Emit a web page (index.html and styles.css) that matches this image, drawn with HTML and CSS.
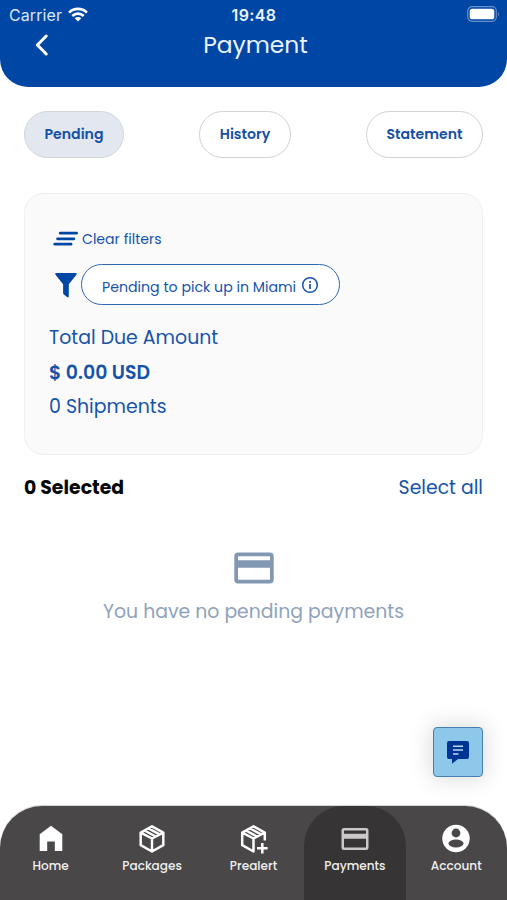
FILE: index.html
```html
<!DOCTYPE html>
<html lang="en">
<head>
<meta charset="utf-8">
<title>Payment</title>
<link rel="stylesheet" href="styles.css">
</head>
<body>
<div class="screen">
  <header class="header">
    <div class="status">
      <div class="carrier"><span>Carrier</span>
        <svg class="wifi" viewBox="0 0 20 15" width="20" height="15" fill="none" stroke="#fff" stroke-width="2.6"><path d="M1.1 5.6A12.6 12.6 0 0 1 18.9 5.6M4.3 9A8.1 8.1 0 0 1 15.7 9"/><path d="M10 14.6 6.7 11.3A4.7 4.7 0 0 1 13.3 11.3Z" fill="#fff" stroke="none"/></svg>
      </div>
      <div class="clock">19:48</div>
      <svg class="battery" viewBox="0 0 33 16" width="33" height="16"><rect x=".7" y=".7" width="28.6" height="14.6" rx="4.5" fill="none" stroke="#6690c8" stroke-width="1.2"/><rect x="2.7" y="2.7" width="24.6" height="10.6" rx="2.6" fill="#fff"/><path d="M31 5.7q2 2.3 0 4.6z" fill="#6690c8"/></svg>
    </div>
    <div class="titlebar">
      <svg class="back" viewBox="0 0 14 22" width="14" height="22" fill="none" stroke="#fff" stroke-width="3" stroke-linecap="round" stroke-linejoin="round"><path d="M11.2 2 2.4 11l8.8 9"/></svg>
      <h1>Payment</h1>
    </div>
  </header>

  <main class="content">
    <div class="tabs">
      <button class="tab tab-pending active">Pending</button>
      <button class="tab tab-history">History</button>
      <button class="tab tab-statement">Statement</button>
    </div>

    <section class="card">
      <div class="clear">
        <svg viewBox="0 0 26 16" width="26" height="16" stroke="#0047a5" stroke-width="2.7" stroke-linecap="round"><path d="M7.2 2.2h16.4M4.5 7.8h16.4M1.7 13.2h16.4"/></svg>
        <span>Clear filters</span>
      </div>
      <div class="filter">
        <svg viewBox="0 0 24 26" width="24" height="26"><path d="M2.4 1h19q2 .1 1 1.8L14.8 12.2v12q-.2 1.9-1.7.9l-3.5-2.8q-.5-.5-.5-1.2v-8.9L1.5 2.8Q.5 1.1 2.4 1z" fill="#0047a5"/></svg>
        <div class="chip"><span>Pending to pick up in Miami</span>
          <svg viewBox="0 0 18 18" width="18" height="18" fill="none" stroke="#1553aa" stroke-width="1.5"><circle cx="9" cy="9" r="7.3"/><path d="M9 8v4.9M9 4.9v1.8" stroke-width="1.7"/></svg>
        </div>
      </div>
      <p class="due">Total Due Amount</p>
      <p class="amount">$ 0.00 USD</p>
      <p class="shipments">0 Shipments</p>
    </section>

    <div class="selection"><strong>0 Selected</strong><a>Select all</a></div>

    <div class="empty">
      <svg viewBox="0 0 40 32" width="40" height="32"><path fill-rule="evenodd" fill="#8297b2" d="M4 .5h32a3.7 3.7 0 0 1 3.7 3.7v23.6a3.7 3.7 0 0 1-3.7 3.7H4a3.7 3.7 0 0 1-3.7-3.7V4.2A3.7 3.7 0 0 1 4 .5zM4 4.300v3.900h32V4.300zM4 15.800v11.900h32V15.800z"/></svg>
      <p>You have no pending payments</p>
    </div>
  </main>

  <div class="fab-row">
    <button class="fab" aria-label="Chat">
      <svg viewBox="0 0 24 24" width="24" height="24"><path d="M3 1h18q2 0 2 2v14q0 2-2 2h-9l-6 4.800V19H3q-2 0-2-2V3q0-2 2-2z" fill="#003494"/><path d="M7 6.300h10M7 10.100h10M7 13.900h5.500" stroke="#b7daf0" stroke-width="1.500"/></svg>
    </button>
  </div>

  <nav class="nav">
    <a class="item"><svg viewBox="0 0 28 30" width="28" height="30"><path fill="#fff" d="M2.700 27V10.300L14 1.800l11.300 8.500V27h-7.500v-9.500h-7.600V27z"/></svg><span>Home</span></a>
    <a class="item"><svg viewBox="0 0 28 30" width="28" height="30" fill="none" stroke="#fff" stroke-width="2.500" stroke-linejoin="round"><path d="M14 2.300 25.300 8.600V21.200L14 27.500 2.700 21.200V8.600zM2.700 8.600 14 14.500 25.300 8.600M14 14.500v13M10.500 4.400l11 6M6.500 6.500l11 6"/></svg><span>Packages</span></a>
    <a class="item"><svg viewBox="0 0 28 30" width="28" height="30" fill="none" stroke="#fff" stroke-width="2.500" stroke-linejoin="round" overflow="visible"><path transform="translate(1.300 0)" d="M24.500 16.500V8.600L13.200 2.300 1.900 8.600V21.200L13.200 27.500v-13M1.900 8.600l11.300 5.900L24.500 8.600M9.700 4.400l11 6M5.700 6.500l11 6M22 18.900v10.600M16.700 24.300h10.600"/></svg><span>Prealert</span></a>
    <a class="item current"><svg viewBox="0 0 28 30" width="28" height="30"><path fill-rule="evenodd" fill="#cac8c9" d="M3 4h22a2.500 2.500 0 0 1 2.500 2.500v17A2.500 2.500 0 0 1 25 26H3a2.500 2.500 0 0 1-2.500-2.500v-17A2.500 2.500 0 0 1 3 4zm0 2.500v3.200h22V6.500zm0 8.300v8.700h22v-8.700z"/></svg><span>Payments</span></a>
    <a class="item"><svg viewBox="0 0 28 30" width="28" height="30"><circle cx="14" cy="14.500" r="13.700" fill="#fff"/><circle cx="14" cy="9" r="4.400" fill="#494748"/><ellipse cx="14" cy="19.500" rx="7.500" ry="4" fill="#494748"/></svg><span>Account</span></a>
  </nav>
</div>
</body>
</html>
```
FILE: styles.css
```css
* { box-sizing: border-box; }
body, h1, p { margin: 0; }
body { background: #fff; font-family: Poppins, Inter, sans-serif; color: #1553aa; }
.screen { width: 507px; height: 900px; display: flex; flex-direction: column; overflow: hidden; }
svg { display: block; flex: none; }
button { font-family: inherit; color: inherit; padding: 0; }

.header { height: 87px; flex: none; background: #0047a5; border-radius: 0 0 28px 28px; color: #fff; }
.status { height: 30px; display: grid; grid-template-columns: 1fr auto 1fr; align-items: center; padding: 0 7px 0 9px; font: 400 16px/30px Inter, sans-serif; }
.carrier { display: flex; gap: 6px; letter-spacing: .1px; color: #d8e7f8; }
.wifi { align-self: center; margin-top: -1px; }
.clock { font-weight: 600; letter-spacing: .4px; margin-left: -1px; color: #eaf3ff; }
.battery { justify-self: end; margin-top: -2px; }
.titlebar { height: 30px; display: grid; grid-template-columns: 1fr auto 1fr; align-items: center; }
.back { margin-left: 35px; }
h1 { font-size: 23.4px; font-weight: 400; line-height: 30px; margin-left: 4px; color: #eaf3ff; }

.content { flex: 1; padding: 24px 24px 0; }
.tabs { display: flex; justify-content: space-between; }
.tab { height: 47px; border: 1.5px solid #d2d2d4; border-radius: 24px; background: #fff; font-size: 14.1px; font-weight: 600; color: #1550a5; }
.tab-pending { width: 100px; }
.tab-history { width: 92px; }
.tab-statement { width: 117px; }
.tab.active { background: #e3e8f0; border-color: #d0d5da; }

.card { height: 262px; margin-top: 35px; padding: 33px 24px 0; background: #fafafa; border: 1.5px solid #eeefef; border-radius: 20px; }
.clear { display: flex; align-items: center; height: 24px; gap: 3px; margin-left: 4px; font-size: 14.1px; }
.filter { display: flex; align-items: center; gap: 3px; margin: 13px 0 0 5px; }
.chip { width: 259px; height: 41px; padding: 0 0 0 20px; display: flex; align-items: center; gap: 5px; border: 1.5px solid #2f66b2; border-radius: 20.5px; background: #fff; font-size: 14.15px; white-space: nowrap; }
.chip span { padding-top: 6px; }
.card p { font-size: 18.9px; line-height: 34px; }
.card .due { margin-top: 16px; }
.card .amount { font-weight: 600; line-height: 35px; }

.selection { display: flex; justify-content: space-between; margin-top: 18px; font-size: 18.85px; line-height: 30px; }
.selection strong { color: #080808; }

.empty { display: flex; flex-direction: column; align-items: center; margin-top: 49px; font-size: 18.85px; line-height: 30px; color: #8fa2ba; }
.empty p { margin-top: 13px; }

.fab-row { display: flex; justify-content: flex-end; padding: 0 24px 29px; }
.fab { width: 50px; height: 50px; display: flex; align-items: center; justify-content: center; background: #8dc8eb; border: 1.5px solid #477fae; border-radius: 4px; box-shadow: 0 0 22px 3px rgba(0, 0, 0, .13); }

.nav { flex: none; height: 94px; display: grid; grid-template-columns: repeat(5, 1fr); background: #494748; border-radius: 42px 42px 0 0; overflow: hidden; box-shadow: 0 -1px 1px rgba(0, 0, 0, .18); }
.item { display: flex; flex-direction: column; align-items: center; padding-top: 18px; font-size: 12.1px; font-weight: 500; line-height: 16px; color: #f0efef; }
.item span { margin-top: 4px; }
.current { background: #373435; border-radius: 40px 40px 0 0; }
```
